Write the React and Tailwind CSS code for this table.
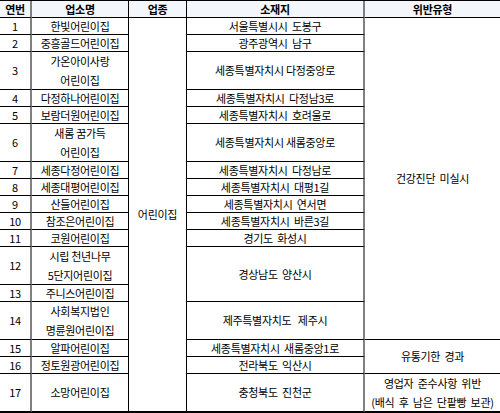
import React from "react"

const rows = [
    { no: 1, name: ["한빛어린이집"], addr: "서울특별시시  도봉구" },
    { no: 2, name: ["중흥골드어린이집"], addr: "광주광역시  남구" },
    { no: 3, name: ["가온아이사랑", "어린이집"], addr: "세종특별자치시 다정중앙로", tall: true },
    { no: 4, name: ["다정하나어린이집"], addr: "세종특별자치시  다정남3로" },
    { no: 5, name: ["보람더원어린이집"], addr: "세종특별자치시  호려울로" },
    { no: 6, name: ["새롬 꿈가득", "어린이집"], addr: "세종특별자치시 새롬중앙로", tall: true },
    { no: 7, name: ["세종다정어린이집"], addr: "세종특별자치시  다정남로" },
    { no: 8, name: ["세종대평어린이집"], addr: "세종특별자치시  대평1길" },
    { no: 9, name: ["산들어린이집"], addr: "세종특별자치시  연서면" },
    { no: 10, name: ["참조은어린이집"], addr: "세종특별자치시  바른3길" },
    { no: 11, name: ["코원어린이집"], addr: "경기도  화성시" },
    { no: 12, name: ["시립 천년나무", "5단지어린이집"], addr: "경상남도  양산시", tall: true, addrSpan: 2 },
    { no: 13, name: ["주니스어린이집"], addr: null },
    { no: 14, name: ["사회복지법인", "명륜원어린이집"], addr: "제주특별자치도   제주시", tall: true },
    { no: 15, name: ["알파어린이집"], addr: "세종특별자치시  새롬중앙1로" },
    { no: 16, name: ["정토원광어린이집"], addr: "전라북도  익산시" },
    { no: 17, name: ["소망어린이집"], addr: "충청북도  진천군", tall: true },
]

const cell = "flex flex-col items-center justify-center text-center whitespace-pre border-b border-black"
const col1 = "border-r-2 border-r-[#808080]"
const col2 = "border-r border-r-black"
const col4 = "border-r-2 border-r-[#808080]"

export default function App() {
    return (
        <div className="w-[500px] bg-white text-black text-[11px] tracking-[-0.3px] leading-[19px] font-['Noto_Sans_CJK_KR',sans-serif]">
            <div className="grid grid-cols-[32px_97px_58px_178px_135px] grid-rows-[17px_17px_17px_38px_17px_17px_38px_17px_17px_17px_17px_17px_38px_17px_38px_17px_17px_38px] border-t border-b border-black">
                <div className={`${cell} ${col1} bg-[#f3f6fb] font-bold`}>연번</div>
                <div className={`${cell} ${col2} bg-[#f3f6fb] font-bold`}>업소명</div>
                <div className={`${cell} ${col2} bg-[#f3f6fb] font-bold`}>업종</div>
                <div className={`${cell} ${col4} bg-[#f3f6fb] font-bold`}>소재지</div>
                <div className={`${cell} bg-[#f3f6fb] font-bold`}>위반유형</div>

                {rows.map((r) => (
                    <React.Fragment key={r.no}>
                        <div className={`${cell} ${col1}`}>{r.no}</div>
                        <div className={`${cell} ${col2}`}>
                            {r.name.map((n) => (
                                <span key={n}>{n}</span>
                            ))}
                        </div>
                        {r.no === 1 && <div className={`${cell} ${col2} row-span-17`}>어린이집</div>}
                        {r.addr && (
                            <div className={`${cell} ${col4} ${r.addrSpan === 2 ? "row-span-2" : ""}`}>{r.addr}</div>
                        )}
                        {r.no === 1 && <div className={`${cell} row-span-14`}>건강진단  미실시</div>}
                        {r.no === 15 && <div className={`${cell} row-span-2`}>유통기한  경과</div>}
                        {r.no === 17 && (
                            <div className={cell}>
                                <span>영업자  준수사항  위반</span>
                                <span>(배식  후  남은  단팥빵  보관)</span>
                            </div>
                        )}
                    </React.Fragment>
                ))}
            </div>
        </div>
    )
}
